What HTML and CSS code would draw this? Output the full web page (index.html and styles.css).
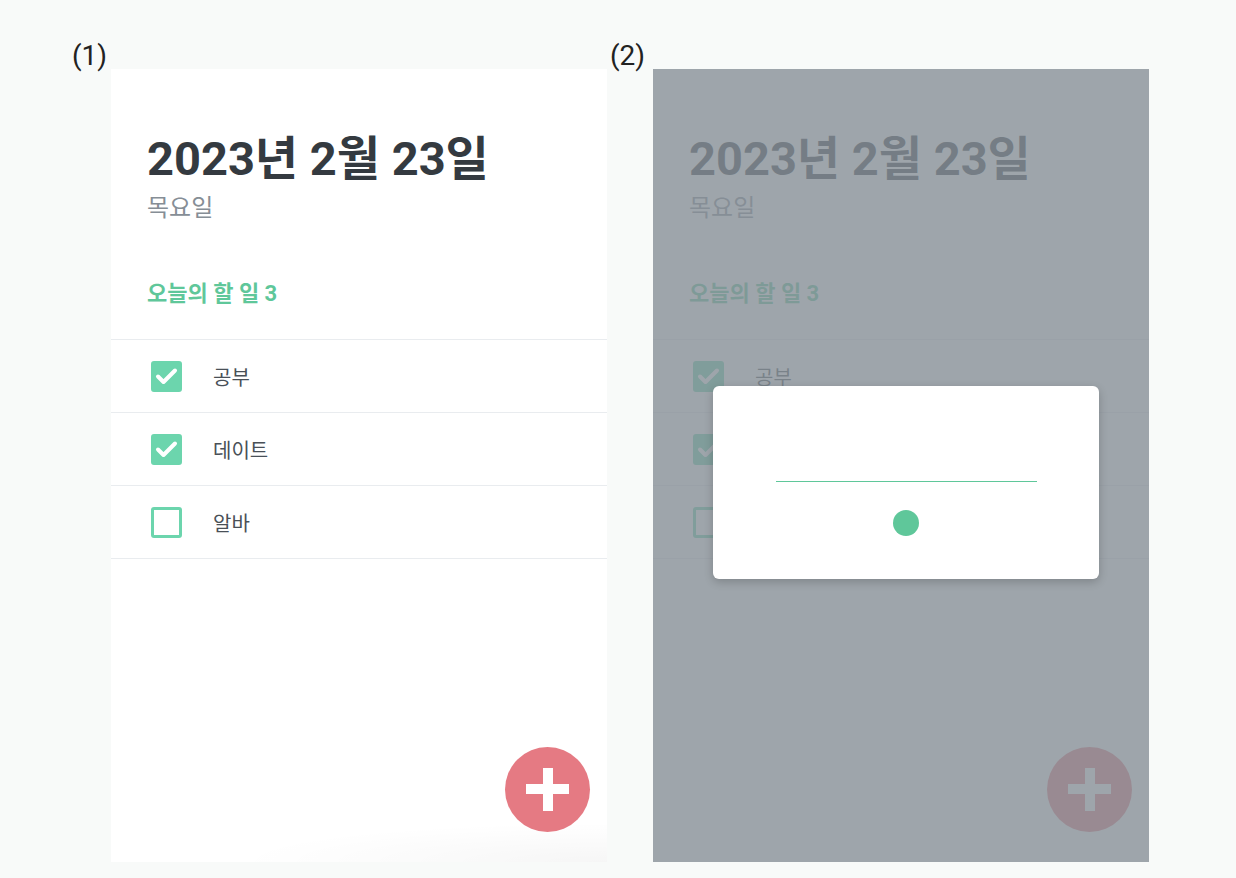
FILE: index.html
```html
<!DOCTYPE html>
<html lang="ko">
<head>
    <meta charset="UTF-8">
    <meta name="viewport" content="width=device-width, initial-scale=1.0">
    <title>오늘의 할 일</title>
    <link rel="stylesheet" href="styles.css">
</head>
<body>
    <main class="stage">
        <!-- (1) 기본 화면 -->
        <span class="label">(1)</span>
        <section class="phone">
            <header class="todo-head">
                <h1>2023년 2월 23일</h1>
                <p class="day">목요일</p>
                <p class="count">오늘의 할 일 3</p>
            </header>
            <ul class="todo-list">
                <li class="todo-item done">
                    <span class="check"><svg viewBox="0 0 31 31"><path d="M7 15.5l5.5 5.5L24 9.5"/></svg></span>
                    <span class="text">공부</span>
                </li>
                <li class="todo-item done">
                    <span class="check"><svg viewBox="0 0 31 31"><path d="M7 15.5l5.5 5.5L24 9.5"/></svg></span>
                    <span class="text">데이트</span>
                </li>
                <li class="todo-item">
                    <span class="check"></span>
                    <span class="text">알바</span>
                </li>
            </ul>
            <div class="bottom-fade"></div>
            <button class="fab" type="button" aria-label="추가"><span class="plus"></span></button>
        </section>

        <!-- (2) 입력 모달 -->
        <span class="label label-2">(2)</span>
        <section class="phone">
            <header class="todo-head">
                <h1>2023년 2월 23일</h1>
                <p class="day">목요일</p>
                <p class="count">오늘의 할 일 3</p>
            </header>
            <ul class="todo-list">
                <li class="todo-item done">
                    <span class="check"><svg viewBox="0 0 31 31"><path d="M7 15.5l5.5 5.5L24 9.5"/></svg></span>
                    <span class="text">공부</span>
                </li>
                <li class="todo-item done">
                    <span class="check"><svg viewBox="0 0 31 31"><path d="M7 15.5l5.5 5.5L24 9.5"/></svg></span>
                    <span class="text">데이트</span>
                </li>
                <li class="todo-item">
                    <span class="check"></span>
                    <span class="text">알바</span>
                </li>
            </ul>
            <button class="fab" type="button" aria-label="추가"><span class="plus"></span></button>
            <div class="overlay"></div>
            <form class="modal">
                <input class="modal-input" type="text">
                <span class="modal-dot"></span>
            </form>
        </section>
    </main>
</body>
</html>
```

FILE: styles.css
```css
body {
    margin: 0;
    padding: 0;
    background-color: #f8faf9;
    font-family: Roboto, "Noto Sans CJK KR", sans-serif;
    color: #343a40;
}

.stage {
    display: grid;
    grid-template-columns: 39px 496px 46px 496px;
    align-items: start;
    padding: 39px 0 0 72px;
}

.label {
    font-size: 28px;
    line-height: 33px;
    color: #222;
}

.label-2 {
    padding-left: 3px;
}

.phone {
    position: relative;
    margin-top: 30px;
    height: 793px;
    background-color: #fff;
    overflow: hidden;
}

/* 헤더 */
.todo-head {
    padding: 62px 36px 0 36px;
}

.todo-head h1 {
    margin: 0;
    font-size: 47px;
    line-height: 55px;
    font-weight: 700;
    color: #343a40;
}

.todo-head .day {
    margin: 8px 0 0 0;
    font-size: 24px;
    line-height: 29px;
    color: #868e96;
}

.todo-head .count {
    margin: 58px 0 0 0;
    font-size: 22px;
    line-height: 26px;
    font-weight: 700;
    color: #5fc79a;
}

/* 목록 */
.todo-list {
    list-style: none;
    margin: 32px 0 0 0;
    padding: 0;
    border-top: 1px solid #e9ecef;
}

.todo-item {
    display: flex;
    align-items: center;
    height: 72px;
    padding-left: 40px;
    border-bottom: 1px solid #e9ecef;
}

.check {
    position: relative;
    width: 31px;
    height: 31px;
    box-sizing: border-box;
    border: 3px solid #6cd5ad;
    border-radius: 3px;
}

.todo-item.done .check {
    background-color: #6cd5ad;
}

.check svg {
    position: absolute;
    left: -3px;
    top: -3px;
    width: 31px;
    height: 31px;
    fill: none;
    stroke: #fff;
    stroke-width: 4;
    stroke-linecap: round;
    stroke-linejoin: round;
}

.text {
    margin-left: 31px;
    font-size: 20px;
    color: #495057;
}

.bottom-fade {
    position: absolute;
    left: 120px;
    right: 0;
    bottom: 0;
    height: 40px;
    background: radial-gradient(ellipse at 100% 100%, rgba(0, 0, 0, 0.035), rgba(0, 0, 0, 0) 70%);
}

/* 추가 버튼 */
.fab {
    position: absolute;
    right: 17px;
    bottom: 30px;
    width: 85px;
    height: 85px;
    border: none;
    border-radius: 50%;
    background-color: #e57a83;
    padding: 0;
    display: flex;
    justify-content: center;
    align-items: center;
}

.plus {
    position: relative;
    width: 43px;
    height: 43px;
}

.plus::before,
.plus::after {
    content: "";
    position: absolute;
    background-color: #fff;
}

.plus::before {
    left: 0;
    right: 0;
    top: 16px;
    height: 10px;
}

.plus::after {
    top: 0;
    bottom: 0;
    left: 17px;
    width: 10px;
}

/* 모달 */
.overlay {
    position: absolute;
    inset: 0;
    background-color: rgba(134, 142, 150, 0.8);
}

.modal {
    position: absolute;
    left: 60px;
    top: 317px;
    width: 386px;
    height: 193px;
    box-sizing: border-box;
    padding-top: 66px;
    background-color: #fff;
    border-radius: 6px;
    box-shadow: 0 3px 10px rgba(0, 0, 0, 0.2);
    display: flex;
    flex-direction: column;
    align-items: center;
}

.modal-input {
    width: 261px;
    height: 30px;
    box-sizing: border-box;
    border: none;
    border-bottom: 1px solid #5fc79a;
    outline: none;
    padding: 0;
    background: transparent;
}

.modal-dot {
    margin-top: 28px;
    width: 26px;
    height: 26px;
    border-radius: 50%;
    background-color: #5fc79a;
}
```
